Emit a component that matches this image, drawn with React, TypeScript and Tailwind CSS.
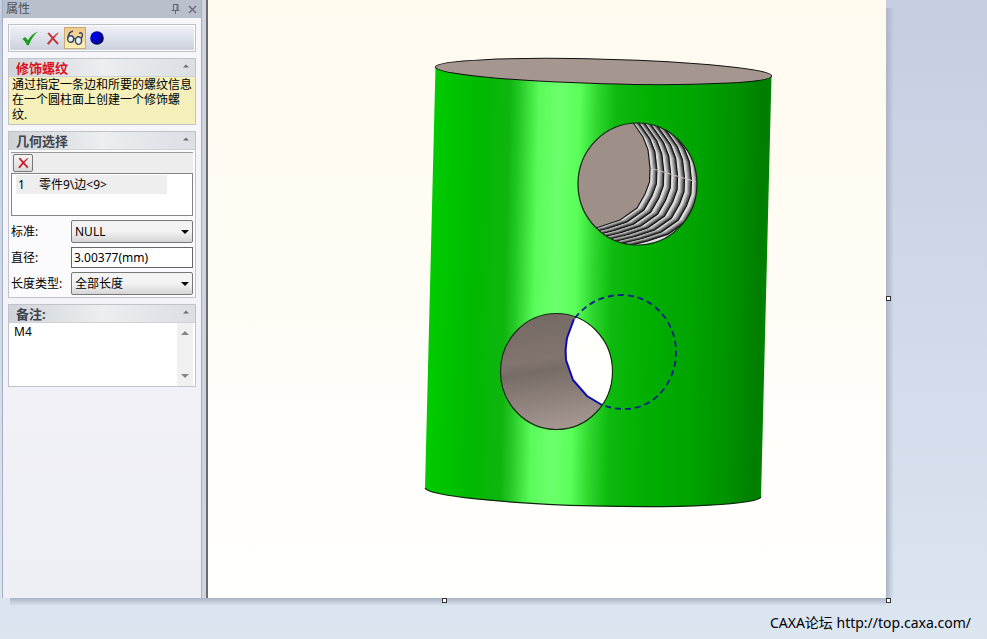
import type { ReactNode } from "react";

function Arrow({ down = false, className = "w-2" }: { down?: boolean; className?: string }) {
  return (
    <svg viewBox="0 0 8 4" className={`h-1 ${className}`} fill="currentColor">
      <path d={down ? "M0 0H8L4 4Z" : "M0 4H8L4 0Z"} />
    </svg>
  );
}

function CrossIcon({ className }: { className: string }) {
  return (
    <svg viewBox="0 0 16 16" className={className} fill="currentColor">
      <path d="M1.5 2 3.5 1 8 6 13 1.5 14.5 1.5 9.3 7.6 14.5 13.3 13 15 7.8 9.3 3 15 1 13.8 6.3 7.7Z" />
    </svg>
  );
}

function TitleBar() {
  return (
    <div className="flex h-[18px] items-center bg-[#bac0cb] pr-1 pl-[3px] text-[#4d525b]">
      <h1 className="flex-1 text-xs leading-4">属性</h1>
      <button aria-label="Pin" className="mr-2">
        <svg viewBox="0 0 9 10" className="h-[10px] w-[9px]" fill="none" stroke="#636975">
          <path d="M2 .5H7M2.5 .5V6M6 .5V6M7 .5V6M.5 6.5H8.5M4.5 7V10" />
        </svg>
      </button>
      <button aria-label="Close">
        <svg viewBox="0 0 9 9" className="h-[9px] w-[9px]" fill="none" stroke="#636975" strokeWidth="1.3">
          <path d="M1 1 8 8M8 1 1 8" />
        </svg>
      </button>
    </div>
  );
}

function Toolbar() {
  return (
    <div className="mx-1 mt-1.5 border border-[#bcc0c9] bg-white p-px">
      <div className="flex h-6 items-center bg-linear-to-b from-[#eff1f6] to-[#ccd1dd] pl-2">
        <button aria-label="OK" className="flex w-6 justify-center">
          <svg viewBox="0 0 16 15" className="h-[15px] w-4">
            <path d="M.3 8 3.2 6 6 9.3C8 5.8 11 2.6 15.7.6 11.7 4.6 8.9 8.8 6.8 14.2L4.9 14.2C3.7 11.2 2.3 9.6.3 8Z" fill="#1a9d1b" />
          </svg>
        </button>
        <button aria-label="Cancel" className="flex w-[22px] justify-center">
          <CrossIcon className="h-[15px] w-[14px] text-[#c5343c]" />
        </button>
        <button
          aria-label="Preview"
          className="flex h-[22px] w-[22px] items-center justify-center border border-[#c9ab77] bg-linear-to-b from-[#efc889] to-[#fff0b5]"
        >
          <svg viewBox="0 0 18 16" className="h-4 w-[18px] shrink-0" fill="none" stroke="#34425c" strokeWidth="1.4">
            <path d="M2 8C2.300 4.500 4 1.500 7 1.200M15.500 8.500C16.500 6 17 3.500 15.200 2.800 14.500 2.600 13.800 3 13.200 3.600M7.800 8.800C8.400 8 9.200 8.300 9.600 9.400" />
            <ellipse cx="4.700" cy="9" rx="3" ry="3.300" fill="#e4effa" />
            <ellipse cx="12.500" cy="10.600" rx="3.100" ry="3.800" fill="#e4effa" />
          </svg>
        </button>
        <button aria-label="Render" className="flex w-[22px] justify-center">
          <svg viewBox="0 0 14 14" className="h-[14px] w-[14px]">
            <defs>
              <radialGradient id="ball" cx=".35" cy=".4" r=".65">
                <stop offset="0" stopColor="#0000f4" />
                <stop offset=".5" stopColor="#0000c4" />
                <stop offset="1" stopColor="#000050" />
              </radialGradient>
            </defs>
            <circle cx="7" cy="7" r="6.800" fill="url(#ball)" />
          </svg>
        </button>
      </div>
    </div>
  );
}

type SectionProps = { title: string; titleClass?: string; className?: string; children: ReactNode };

function Section({ title, titleClass = "text-[#3f444c]", className = "", children }: SectionProps) {
  return (
    <section className={`mx-1 mt-1.5 border border-[#bfc3ca] ${className}`}>
      <header className="flex h-[18px] items-center justify-between border-b border-[#cfd3d8] bg-linear-to-r from-[#d0d3d8] via-[#eceef0] to-[#dadfe4] pr-1.5 pl-[7px]">
        <h2 className={`text-[13px] leading-4 font-bold ${titleClass}`}>{title}</h2>
        <button aria-label={title} className="flex h-4 items-start pt-1 text-[#686e78]">
          <Arrow className="w-1.5" />
        </button>
      </header>
      {children}
    </section>
  );
}

function Field({ id, label, children }: { id: string; label: string; children: ReactNode }) {
  return (
    <div className="flex items-center">
      <label htmlFor={id} className="w-[60px] whitespace-nowrap">
        {label}
      </label>
      {children}
    </div>
  );
}

function Dropdown({ id, value }: { id: string; value: string }) {
  return (
    <div className="relative flex-1">
      <select
        id={id}
        className="block h-[23px] w-full appearance-none rounded-xs border border-[#777] bg-linear-to-b from-[#f3f3f3] from-50% to-[#d5d5d5] px-[3px] leading-4"
      >
        <option>{value}</option>
      </select>
      <Arrow down className="pointer-events-none absolute top-[10px] right-1 w-2" />
    </div>
  );
}

function PropertyPanel() {
  return (
    <aside className="w-[200px] shrink-0 border-x border-[#a4b0c0] bg-linear-to-b from-[#f7f7fb] to-[#eeeef5] text-xs leading-[15px]">
      <TitleBar />
      <div className="px-px">
        <Toolbar />
        <Section title="修饰螺纹" titleClass="text-[#d9121c]" className="bg-[#f5efba]">
          <p className="h-[47px] pl-[3px]">通过指定一条边和所要的螺纹信息在一个圆柱面上创建一个修饰螺纹.</p>
        </Section>
        <Section title="几何选择" className="bg-[#fbfbfd]">
          <div className="p-0.5">
            <div className="flex h-[21px] items-center border-t border-[#999] bg-[#ededed] pl-0.5">
              <button
                aria-label="Delete"
                className="flex h-[18px] w-5 items-center justify-center rounded-xs border border-[#777] bg-linear-to-b from-[#f4f4f4] to-[#dadada]"
              >
                <CrossIcon className="h-3 w-[13px] text-[#c91624]" />
              </button>
            </div>
            <ul className="h-[43px] border border-[#858585] bg-white pr-[25px] pl-1">
              <li className="mt-px flex h-[19px] items-center bg-[#eeeeee] pl-0.5">
                <span className="w-[21px]">1</span>
                <span>零件9\边&lt;9&gt;</span>
              </li>
            </ul>
            <div className="mt-1 flex flex-col gap-[3px]">
              <Field id="standard" label="标准:">
                <Dropdown id="standard" value="NULL" />
              </Field>
              <Field id="diameter" label="直径:">
                <input
                  id="diameter"
                  defaultValue="3.00377(mm)"
                  className="my-px h-[21px] w-0 flex-1 border border-[#666] bg-white px-0.5"
                />
              </Field>
              <Field id="length" label="长度类型:">
                <Dropdown id="length" value="全部长度" />
              </Field>
            </div>
          </div>
        </Section>
        <Section title="备注:" className="bg-white">
          <div className="flex h-[63px] pr-0.5">
            <textarea
              aria-label="备注"
              defaultValue="M4"
              className="block min-w-0 flex-1 resize-none overflow-hidden px-[5px] pt-px"
            />
            <div className="flex w-4 flex-col items-center justify-between bg-[#f0f0f0] py-2 text-[#858585]">
              <Arrow />
              <Arrow down />
            </div>
          </div>
        </Section>
      </div>
    </aside>
  );
}

// Edge of the threaded bore; every thread turn repeats it along the bore axis
const THREAD_EDGE =
  "M618 102 634 124 643 137 648 150 650 168 649.500 182 645 194 637 208 620 220 599 227 570 234";
const TURNS = [1, 2, 3, 4, 5, 6, 7];

function Threads() {
  return (
    <g clipPath="url(#bore)" fill="none">
      <path d={`${THREAD_EDGE}V260H720V102Z`} fill="#dcdcdc" />
      {TURNS.map((turn) => (
        <g key={turn} transform={`translate(${turn * 6.9} ${turn * 2})`}>
          <path d={THREAD_EDGE} transform="translate(-2.400 -.700)" stroke="#b2b2b2" strokeWidth="3.600" />
          <path d={THREAD_EDGE} transform="translate(-1.600 -.500)" stroke="#858585" strokeWidth="2.800" />
          <path d={THREAD_EDGE} transform="translate(-.700 -.200)" stroke="#505050" strokeWidth="2" />
          <path d={THREAD_EDGE} stroke="#141414" strokeWidth="1.100" />
        </g>
      ))}
      <path d="M650 168 697 182" stroke="#c8c0b8" />
      <path d={`${THREAD_EDGE}H560V102Z`} fill="#9e9089" />
      <path d={THREAD_EDGE} stroke="#1c1c1c" strokeWidth="1.200" />
    </g>
  );
}

function Model() {
  return (
    <svg viewBox="208 0 678 598" className="block min-w-0 flex-1" role="img" aria-label="Cylinder">
      <defs>
        <linearGradient id="body" gradientUnits="userSpaceOnUse" x1="431" y1="280" x2="767" y2="288">
          <stop offset="0" stopColor="#00cb00" />
          <stop offset=".13" stopColor="#00b900" />
          <stop offset=".22" stopColor="#0fb50f" />
          <stop offset=".25" stopColor="#24c824" />
          <stop offset=".31" stopColor="#5afb5a" />
          <stop offset=".37" stopColor="#6cff6c" />
          <stop offset=".43" stopColor="#5aff5a" />
          <stop offset=".48" stopColor="#30d830" />
          <stop offset=".54" stopColor="#0dba0d" />
          <stop offset=".65" stopColor="#00af00" />
          <stop offset=".78" stopColor="#00a400" />
          <stop offset=".9" stopColor="#009100" />
          <stop offset=".98" stopColor="#007e00" />
          <stop offset="1" stopColor="#008400" />
        </linearGradient>
        <linearGradient id="hole" x1=".4" y1="0" x2=".55" y2="1">
          <stop offset="0" stopColor="#756964" />
          <stop offset=".38" stopColor="#82756f" />
          <stop offset=".48" stopColor="#786c67" />
          <stop offset="1" stopColor="#a79992" />
        </linearGradient>
        <clipPath id="bore">
          <ellipse cx="637.500" cy="184" rx="59.500" ry="61" />
        </clipPath>
        <clipPath id="drill">
          <ellipse cx="556.500" cy="371.500" rx="56" ry="58" />
        </clipPath>
      </defs>

      <path d="M435.500 67 425 488A168.200 14 1.530 0 0 761 497L771.500 76Z" fill="url(#body)" />
      <path d="M425 488A168.200 14 1.530 0 0 761 497" fill="none" stroke="#0b260b" strokeWidth="1.200" />
      <ellipse cx="603.500" cy="71.500" rx="168.200" ry="12.300" transform="rotate(1.530 603.500 71.500)" fill="#a59790" stroke="#111" />

      <Threads />
      <ellipse cx="637.500" cy="184" rx="59.500" ry="61" fill="none" stroke="#142214" strokeWidth="1.200" />

      <g clipPath="url(#drill)">
        <path d="M500 313H613V430H500Z" fill="url(#hole)" />
        <path d="M574 319 567 338 566 360 573 380 587 396 602 405 630 405V300Z" fill="#fffffc" />
      </g>
      <ellipse cx="556.500" cy="371.500" rx="56" ry="58" fill="none" stroke="#142c14" strokeWidth="1.200" />
      <path d="M574 319 567 338 565.500 350 566 360 573 380 587 396 602 405" fill="none" stroke="#0b0bb4" strokeWidth="2" />
      <path
        d="M575 318C588 302 604 295 622 295C652 295 676 321 676 352C676 384 653 409 625 409Q613 409 602 405"
        fill="none"
        stroke="#061e8c"
        strokeWidth="1.800"
        strokeDasharray="6 4"
      />
    </svg>
  );
}

function Handle({ className }: { className: string }) {
  return <span className={`absolute h-[5px] w-[5px] border border-[#333] bg-white ${className}`} />;
}

export default function App() {
  return (
    <div className="flex min-h-screen flex-col bg-linear-to-b from-[#c5cee1] to-[#dce6f1] font-['Noto_Sans','Noto_Sans_CJK_SC',sans-serif] text-black">
      <main className="relative mr-[101px] ml-0.5 flex flex-1">
        <PropertyPanel />
        <div className="w-1.5 shrink-0 border-r-2 border-[#6a6c72] bg-[#d0d4df]" />
        <div className="flex min-w-0 flex-1 bg-linear-to-b from-[#fffaee] to-[#fffffe]">
          <Model />
        </div>
        <div className="absolute top-2 -right-2 bottom-0 w-2 bg-linear-to-r from-[#aab4c6] to-transparent" />
        <div className="absolute right-0 -bottom-2 left-2 h-2 bg-linear-to-b from-[#aab4c6] to-transparent" />
        <Handle className="top-1/2 -right-[5px] -mt-[3px]" />
        <Handle className="-bottom-[5px] left-1/2 -ml-0.5" />
        <Handle className="-right-[5px] -bottom-[5px]" />
      </main>
      <footer className="flex h-[41px] items-center justify-end pt-2 pr-4 text-sm">
        <p>
          CAXA论坛 <a href="http://top.caxa.com/">http://top.caxa.com/</a>
        </p>
      </footer>
    </div>
  );
}
